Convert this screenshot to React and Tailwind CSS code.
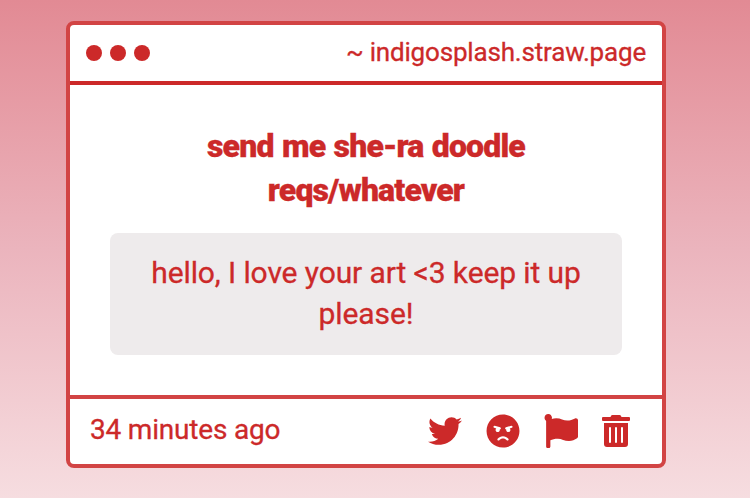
import { FaTwitter, FaAngry, FaFlag, FaTrashAlt } from "react-icons/fa";

const actions = [
  { name: "Share on Twitter", Icon: FaTwitter, size: "size-[34px]" },
  { name: "Block sender", Icon: FaAngry, size: "size-[34px]" },
  { name: "Report", Icon: FaFlag, size: "size-[34px]" },
  { name: "Delete", Icon: FaTrashAlt, size: "h-8 w-7" },
];

function TitleBar({ title }) {
  return (
    <header className="flex h-[60px] items-center justify-between border-b-4 border-[#cc2929] px-4">
      <div className="flex gap-2">
        <span className="size-4 rounded-full bg-[#cc2929]" />
        <span className="size-4 rounded-full bg-[#cc2929]" />
        <span className="size-4 rounded-full bg-[#cc2929]" />
      </div>
      <p className="pb-0.5 text-[26px] leading-none tracking-[-0.18px]">
        {title}
      </p>
    </header>
  );
}

export default function App() {
  return (
    <div className="flex h-screen items-start justify-start overflow-hidden bg-linear-to-b from-[#e28a94] via-[#ebb4bd] to-[#f6dde0] pt-[21px] pl-[66px] font-['Roboto',sans-serif] text-[#cc2929] [-webkit-text-stroke:0.3px]">
      <div className="flex h-[447px] w-[600px] flex-col rounded-lg border-4 border-[#d24444] bg-white">
        <TitleBar title="~ indigosplash.straw.page" />

        {/* Prompt and message */}
        <main className="flex-1 px-10 pt-[39px] text-center">
          <h1 className="px-16 text-[32px] leading-[44px] font-black tracking-[-0.85px] [word-spacing:1.25px]">
            send me she-ra doodle reqs/whatever
          </h1>
          <div className="mt-[21px] h-[122px] rounded-lg bg-[#eeebec] px-8 pt-[19px] text-[30px] leading-[41px] tracking-[-0.1px]">
            hello, I love your art &lt;3 keep it up please!
          </div>
        </main>

        <footer className="flex h-[69px] items-center justify-between border-t-4 border-[#d24444] pr-8 pl-5">
          <p className="pb-[3px] text-[28px] leading-none tracking-[-0.2px]">
            34 minutes ago
          </p>
          <div className="flex items-center gap-6 pb-0.5">
            {actions.map(({ name, Icon, size }) => (
              <button key={name} type="button" aria-label={name}>
                <Icon className={size} />
              </button>
            ))}
          </div>
        </footer>
      </div>
    </div>
  );
}
